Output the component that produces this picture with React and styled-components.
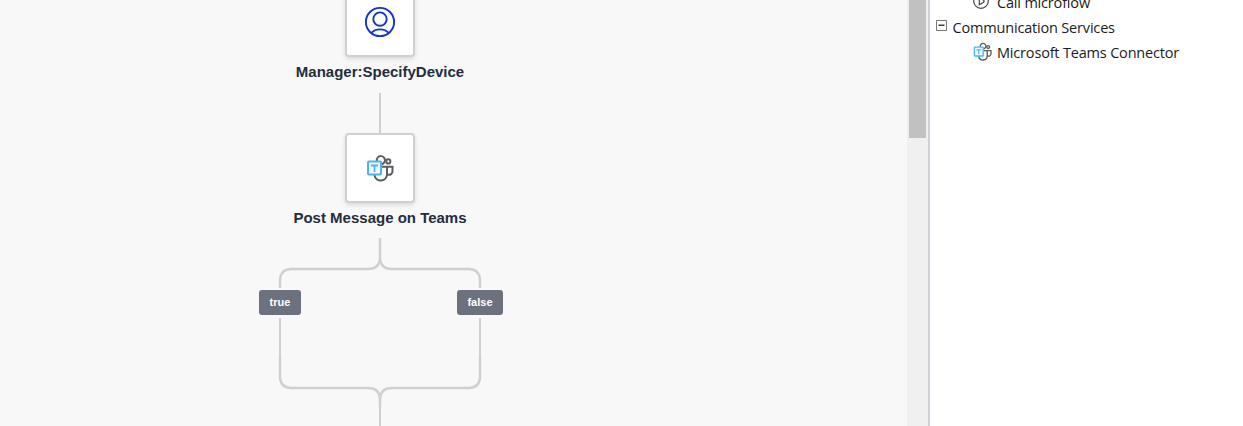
import React from "react";
import styled, { createGlobalStyle } from "styled-components";

const GlobalStyle = createGlobalStyle`
  * { box-sizing: border-box; }
  body { margin: 0; overflow: hidden; background: #f8f8f8; }
`;

const Editor = styled.div`
  display: flex;
  width: 1243px;
  height: 426px;
  overflow: hidden;
`;

const Canvas = styled.main`
  flex: 0 0 907px;
  background: #f8f8f8;
  overflow: hidden;
`;

const Flow = styled.div`
  width: 760px;
  margin-top: -13px;
  display: flex;
  flex-direction: column;
  align-items: center;
`;

const Activity = styled.div`
  width: 70px;
  height: 70px;
  flex: none;
  display: flex;
  align-items: center;
  justify-content: center;
  background: #fff;
  border: 2px solid #ced0d4;
  border-radius: 4px;
  box-shadow: 0 2px 4px rgba(0, 0, 0, 0.13);
`;

const ActivityLabel = styled.div`
  height: ${(p) => p.$height}px;
  padding-top: 5px;
  font: bold 15px/20px "Liberation Sans", Arial, sans-serif;
  color: #252d3d;
  white-space: nowrap;
`;

const Connector = styled.div`
  width: 2px;
  height: 40px;
  background: #ced0d4;
`;

const BranchLines = styled.svg`
  display: block;
  flex: none;
  fill: none;
  stroke: #ced0d4;
`;

const Outcomes = styled.div`
  width: 400px;
  height: 30px;
  flex: none;
  display: grid;
  grid-template-columns: 1fr 1fr;
  align-items: center;
  justify-items: center;
  padding-bottom: 1px;
`;

const Outcome = styled.span`
  width: ${(p) => p.$width}px;
  height: 25px;
  border-radius: 3px;
  background: #6c717e;
  color: #fff;
  font: bold 11px/24px "Liberation Sans", Arial, sans-serif;
  text-align: center;
`;

const Scrollbar = styled.div`
  flex: 0 0 21px;
  padding-left: 2px;
  background: #f0f0f0;
`;

const Thumb = styled.div`
  width: 17px;
  height: 138px;
  background: #c1c1c1;
`;

const Toolbox = styled.aside`
  flex: 1;
  padding-left: 6px;
  border-left: 2px solid #ced0d8;
  background: #fff;
  overflow: hidden;
`;

const Tree = styled.div`
  margin-top: -10px;
`;

const TreeRow = styled.div`
  height: 25px;
  display: flex;
  align-items: center;
  padding-left: ${(p) => (p.$nested ? 37 : 0)}px;
  font: 14.5px/25px "Open Sans", "Noto Sans", sans-serif;
  color: #1b1b1b;
  white-space: nowrap;
`;

const TreeIcon = styled.span`
  flex: none;
  margin-bottom: ${(p) => p.$lift}px;
`;

const TreeText = styled.span`
  margin-left: ${(p) => p.$gap}px;
  letter-spacing: -0.18px;
`;

const Glyph = styled.svg`
  display: block;
  flex: none;
  fill: none;
`;

function TeamsIcon({ size, weight = 2 }) {
  return (
    <Glyph width={size} height={size} viewBox="0 0 28 28">
      <g stroke="#5b5d60" strokeWidth={weight}>
        <path d="M10.9 7.2a4.1 4.1 0 1 1 7.4 1.2q-.8 1.2-2.3 1.9" />
        <circle cx="22.3" cy="7.4" r="2.1" />
        <path d="M15.5 12.7h11v4.2c0 3-2 4.4-4.9 3.8M21 12.7v7.6c0 8-11.6 8.5-12.6.4" />
      </g>
      <rect x="2" y="7.6" width="13" height="13" rx="0.8" fill="#f2faff" stroke="#4db3f5" strokeWidth={weight} />
      <path d="M4.9 11.5h7.2M8.5 11.5v6.6" stroke="#4db3f5" strokeWidth={weight * 0.9} />
    </Glyph>
  );
}

function UserIcon() {
  return (
    <Glyph width="32" height="32" viewBox="0 0 32 32" stroke="#1332d0" strokeWidth="1.9">
      <circle cx="16" cy="16" r="14.1" />
      <circle cx="16" cy="13.1" r="6.7" />
      <path d="M7.3 27c4.2-4.9 13.2-4.9 17.4 0" />
    </Glyph>
  );
}

function MicroflowIcon() {
  return (
    <Glyph width="16" height="16" viewBox="0 0 16 16" stroke="#42464f" strokeWidth="1.2">
      <circle cx="8" cy="8" r="7.3" />
      <path d="M6.3 4.5v7.3l4.4-2.600q.7-1 0-2z" />
    </Glyph>
  );
}

function CollapseIcon() {
  return (
    <Glyph width="11" height="11" viewBox="0 0 11 11" stroke="#777" strokeWidth="1">
      <path d="M.5.5h10v10H.5z" />
      <path d="M2.5 5.2h6" stroke="#222" strokeWidth="1.3" />
    </Glyph>
  );
}

export default function App() {
  return (
    <>
      <GlobalStyle />
      <Editor>
        <Canvas>
          <Flow>
            <Activity><UserIcon /></Activity>
            <ActivityLabel $height={36}>Manager:SpecifyDevice</ActivityLabel>
            <Connector />
            <Activity><TeamsIcon size={28} /></Activity>
            <ActivityLabel $height={35}>Post Message on Teams</ActivityLabel>
            <BranchLines width="204" height="50" viewBox="0 0 204 50" strokeWidth="2.5">
              <path d="M102 0v19q0 12-12 12H14Q2 31 2 43v7M102 0v19q0 12 12 12h76q12 0 12 12v7" />
            </BranchLines>
            <Outcomes>
              <Outcome $width={42}>true</Outcome>
              <Outcome $width={46}>false</Outcome>
            </Outcomes>
            <BranchLines width="204" height="108" viewBox="0 0 204 108" strokeWidth="2.5">
              <path d="M2 0v39M202 0v39M102 88v20" strokeWidth="2" />
              <path d="M2 39v19q0 12 12 12h76q12 0 12 12v7M202 39v19q0 12-12 12h-76q-12 0-12 12" />
            </BranchLines>
          </Flow>
        </Canvas>
        <Scrollbar><Thumb /></Scrollbar>
        <Toolbox>
          <Tree>
            <TreeRow $nested>
              <TreeIcon $lift={3}><MicroflowIcon /></TreeIcon>
              <TreeText $gap={8}>Call microflow</TreeText>
            </TreeRow>
            <TreeRow>
              <TreeIcon $lift={4}><CollapseIcon /></TreeIcon>
              <TreeText $gap={5.5}>Communication Services</TreeText>
            </TreeRow>
            <TreeRow $nested>
              <TreeIcon $lift={3}><TeamsIcon size={19} /></TreeIcon>
              <TreeText $gap={5}>Microsoft Teams Connector</TreeText>
            </TreeRow>
          </Tree>
        </Toolbox>
      </Editor>
    </>
  );
}
